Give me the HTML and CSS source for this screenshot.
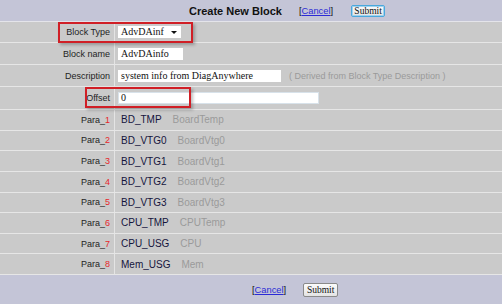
FILE: index.html
```html
<!DOCTYPE html>
<html>
<head>
<meta charset="utf-8">
<link rel="stylesheet" href="styles.css">
</head>
<body>
<div class="page">
  <div class="head">
    <span class="title">Create New Block</span>
    <span class="link">[<a href="#">Cancel</a>]</span>
    <button class="btn btn-focus">Submit</button>
  </div>

  <div class="row r20">
    <div class="label">Block Type</div>
    <div class="value"><div class="select"><span>AdvDAinf</span><i class="arrow"></i></div></div>
  </div>
  <div class="row r21">
    <div class="label">Block name</div>
    <div class="value"><div class="input w-name">AdvDAinfo</div></div>
  </div>
  <div class="row r21">
    <div class="label">Description</div>
    <div class="value"><div class="input w-desc">system info from DiagAnywhere</div><span class="hint">( Derived from Block Type Description )</span></div>
  </div>
  <div class="row r22">
    <div class="label">Offset</div>
    <div class="value"><div class="input w-off">0</div></div>
  </div>

  <div class="row para"><div class="label">Para_<em>1</em></div><div class="value"><span class="v">BD_TMP</span><span class="n">BoardTemp</span></div></div>
  <div class="row para"><div class="label">Para_<em>2</em></div><div class="value"><span class="v">BD_VTG0</span><span class="n">BoardVtg0</span></div></div>
  <div class="row para"><div class="label">Para_<em>3</em></div><div class="value"><span class="v">BD_VTG1</span><span class="n">BoardVtg1</span></div></div>
  <div class="row para"><div class="label">Para_<em>4</em></div><div class="value"><span class="v">BD_VTG2</span><span class="n">BoardVtg2</span></div></div>
  <div class="row para"><div class="label">Para_<em>5</em></div><div class="value"><span class="v">BD_VTG3</span><span class="n">BoardVtg3</span></div></div>
  <div class="row para"><div class="label">Para_<em>6</em></div><div class="value"><span class="v">CPU_TMP</span><span class="n">CPUTemp</span></div></div>
  <div class="row para"><div class="label">Para_<em>7</em></div><div class="value"><span class="v">CPU_USG</span><span class="n">CPU</span></div></div>
  <div class="row para"><div class="label">Para_<em>8</em></div><div class="value"><span class="v">Mem_USG</span><span class="n">Mem</span></div></div>

  <div class="foot">
    <span class="link">[<a href="#">Cancel</a>]</span>
    <button class="btn">Submit</button>
  </div>

  <div class="mark mark-type"></div>
  <div class="mark mark-off"></div>
</div>
</body>
</html>
```

FILE: styles.css
```css
html, body {
  margin: 0;
  padding: 0;
}
body {
  width: 502px;
  height: 304px;
  overflow: hidden;
  font-family: "Liberation Sans", Arial, sans-serif;
  background: #c4c5d7;
}
.page {
  position: relative;
  width: 502px;
  height: 304px;
}
.head {
  height: 21px;
  border-bottom: 1px solid #e4e4ea;
  background: #c4c5d7;
  display: flex;
  align-items: center;
  padding-left: 189px;
  box-sizing: content-box;
}
.title {
  font-weight: bold;
  font-size: 11px;
  color: #111;
  margin-right: 17px;
}
.link {
  font-size: 9.3px;
  color: #111;
}
.link a {
  color: #2b2bd6;
  text-decoration: underline;
}
.head .link {
  margin-right: 18px;
}
.btn {
  font-family: "Liberation Serif", "Times New Roman", serif;
  font-size: 9.5px;
  color: #111;
  padding: 0;
  margin: 0;
  width: 35px;
  height: 14px;
  line-height: 12px;
  border: 1px solid #8a8a8a;
  border-radius: 2px;
  background: linear-gradient(#fbfbfb, #e4e4e4);
}
.btn-focus {
  width: 34px;
  height: 12px;
  line-height: 10px;
  border-color: #4aa8dc;
  box-shadow: 0 0 0 1px #9fd2ef inset;
}
.row {
  display: grid;
  grid-template-columns: 115px 1fr;
  background: #cacaca;
  border-bottom: 1px solid #e6e6e6;
}
.r20 { height: 20px; }
.r21 { height: 21px; }
.r22 { height: 22px; }
.para { height: 19.625px; }
.label {
  border-right: 1px solid #e4e4e4;
  font-size: 9px;
  color: #1e1e1e;
  text-align: right;
  padding-right: 4px;
  display: flex;
  align-items: center;
  justify-content: flex-end;
}
.label em {
  font-style: normal;
  color: #e8262a;
}
.value {
  display: flex;
  align-items: center;
  padding-left: 3px;
}
.input, .select {
  background: #fff;
  height: 12px;
  box-sizing: border-box;
  font-family: "Liberation Serif", "Times New Roman", serif;
  font-size: 10px;
  line-height: 12px;
  color: #111;
  padding-left: 3px;
  white-space: nowrap;
  overflow: hidden;
}
.select {
  width: 63px;
  position: relative;
}
.arrow {
  position: absolute;
  right: 4px;
  top: 5px;
  width: 0;
  height: 0;
  border-left: 3px solid transparent;
  border-right: 3px solid transparent;
  border-top: 3px solid #111;
}
.w-name { width: 65px; }
.w-desc { width: 163px; }
.w-off { width: 201px; border: 1px solid #d8e2ea; padding-left: 2px; line-height: 10px; }
.hint {
  font-size: 9px;
  color: #9a9a9a;
  margin-left: 8px;
}
.para .value { padding-left: 6px; }
.v {
  font-size: 10px;
  color: #15153d;
}
.n {
  font-size: 10px;
  color: #9a9a9a;
  margin-left: 11px;
}
.foot {
  height: 29px;
  display: flex;
  align-items: center;
  padding-left: 252px;
  background: #c4c5d7;
}
.foot .link { margin-right: 17px; }
.mark {
  position: absolute;
  border: 2px solid #d01f26;
  box-sizing: border-box;
  box-shadow: 2px 2px 3px rgba(0, 0, 0, 0.25);
}
.mark-type {
  left: 58px;
  top: 22px;
  width: 135px;
  height: 21px;
}
.mark-off {
  left: 85px;
  top: 87px;
  width: 106px;
  height: 21px;
}
```
